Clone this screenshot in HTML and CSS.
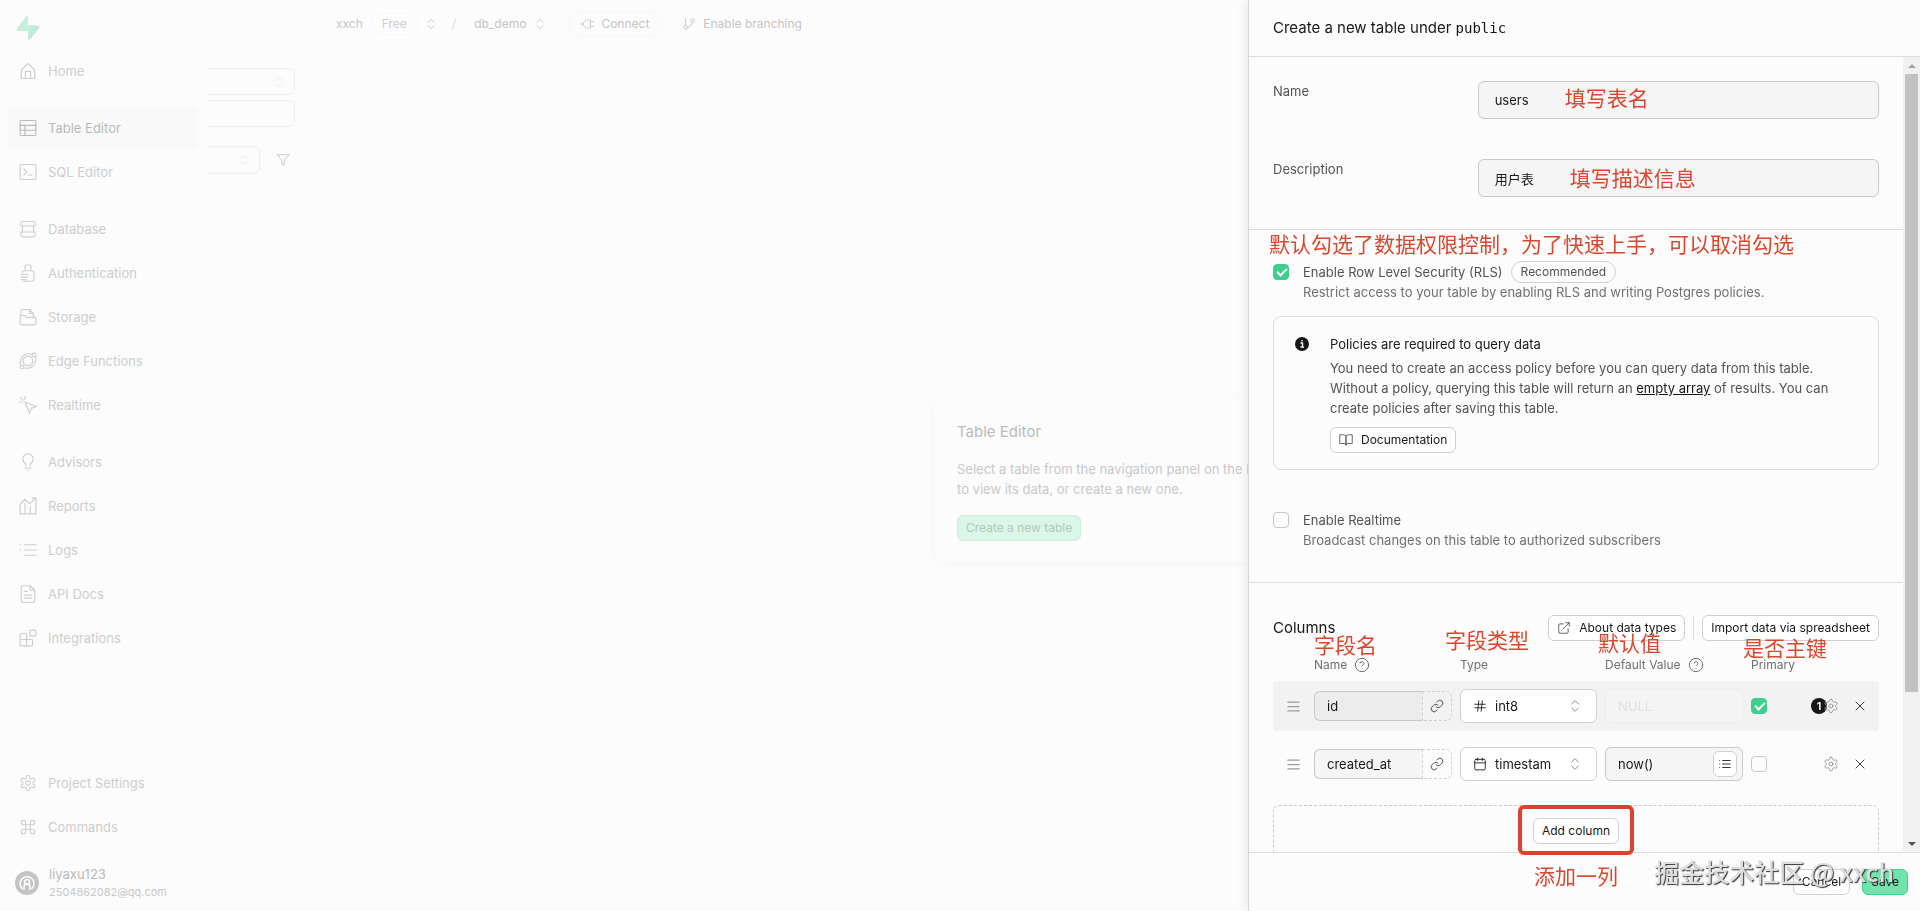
FILE: index.html
```html
<!DOCTYPE html>
<html lang="en">
<head>
    <meta charset="UTF-8">
    <meta name="viewport" content="width=device-width, initial-scale=1.0">
    <title>Table Editor</title>
    <link rel="stylesheet" href="styles.css">
</head>
<body>
    <svg class="sprite" aria-hidden="true">
        <symbol id="i-updown" viewBox="0 0 24 24"><path d="m7 15 5 5 5-5M7 9l5-5 5 5"/></symbol>
        <symbol id="i-gear" viewBox="0 0 24 24"><path d="M12.22 2h-.44a2 2 0 0 0-2 2v.18a2 2 0 0 1-1 1.73l-.43.25a2 2 0 0 1-2 0l-.15-.08a2 2 0 0 0-2.73.73l-.22.38a2 2 0 0 0 .73 2.73l.15.1a2 2 0 0 1 1 1.72v.51a2 2 0 0 1-1 1.74l-.15.09a2 2 0 0 0-.73 2.73l.22.38a2 2 0 0 0 2.73.73l.15-.08a2 2 0 0 1 2 0l.43.25a2 2 0 0 1 1 1.73V20a2 2 0 0 0 2 2h.44a2 2 0 0 0 2-2v-.18a2 2 0 0 1 1-1.73l.43-.25a2 2 0 0 1 2 0l.15.08a2 2 0 0 0 2.73-.73l.22-.39a2 2 0 0 0-.73-2.73l-.15-.08a2 2 0 0 1-1-1.74v-.5a2 2 0 0 1 1-1.74l.15-.09a2 2 0 0 0 .73-2.73l-.22-.38a2 2 0 0 0-2.73-.73l-.15.08a2 2 0 0 1-2 0l-.43-.25a2 2 0 0 1-1-1.73V4a2 2 0 0 0-2-2z"/><circle cx="12" cy="12" r="3"/></symbol>
        <symbol id="i-help" viewBox="0 0 24 24"><circle cx="12" cy="12" r="10"/><path d="M9.09 9a3 3 0 0 1 5.83 1c0 2-3 3-3 3M12 17h.01"/></symbol>
        <symbol id="i-link" viewBox="0 0 24 24"><path d="M10 13a5 5 0 0 0 7.54.54l3-3a5 5 0 0 0-7.07-7.07l-1.72 1.71"/><path d="M14 11a5 5 0 0 0-7.54-.54l-3 3a5 5 0 0 0 7.07 7.07l1.71-1.71"/></symbol>
        <symbol id="i-menu" viewBox="0 0 24 24"><path d="M3 5h18M3 12h18M3 19h18"/></symbol>
        <symbol id="i-close" viewBox="0 0 24 24"><path d="M18 6 6 18M6 6l12 12"/></symbol>
        <symbol id="i-list" viewBox="0 0 24 24"><path d="M8 6h13M8 12h13M8 18h13M3 6h.01M3 12h.01M3 18h.01"/></symbol>
    </svg>

    <div class="app">
        <aside class="sidebar">
            <svg class="logo" viewBox="0 0 24 24" fill="#c6eedd"><path d="M13.9 23.6c-.6.7-1.7.3-1.8-.6V9.3h9.3c1.7 0 2.6 2 1.6 3.3z" fill="#bfebd8"/><path d="M10.1.4c.6-.7 1.7-.3 1.8.6v14H2.6C.9 15 0 13 1 11.700z"/></svg>
            <nav class="nav">
                <ul>
                    <li><a href="#"><svg class="icon" viewBox="0 0 24 24"><path d="M3 10.500 12 2l9 8.500V22H3zM8.500 22v-9.500h7V22"/></svg>Home</a></li>
                </ul>
                <ul>
                    <li><a href="#" class="active"><svg class="icon" viewBox="0 0 24 24"><rect x="1.500" y="2" width="21" height="20" rx="2"/><path d="M1.500 8.500h21M1.500 15h21M8 8.500V22"/></svg>Table Editor</a></li>
                    <li><a href="#"><svg class="icon" viewBox="0 0 24 24"><rect x="1.500" y="2" width="21" height="20" rx="2"/><path d="m6.500 8 4 4-4 4M12 16h5.500"/></svg>SQL Editor</a></li>
                </ul>
                <ul>
                    <li><a href="#"><svg class="icon" viewBox="0 0 24 24"><rect x="2.500" y="2" width="19" height="6" rx="2"/><path d="M4.500 8v8M19.500 8v8"/><rect x="2.500" y="16" width="19" height="6.500" rx="2"/></svg>Database</a></li>
                    <li><a href="#"><svg class="icon" viewBox="0 0 24 24"><path d="M4 12v-1a2 2 0 0 1 2-2h12a2 2 0 0 1 2 2v10a2 2 0 0 1-2 2H6M8 9V5a4 4 0 0 1 8 0v4M3 14h9M3 17.500h9M3 21h7"/></svg>Authentication</a></li>
                    <li><a href="#"><svg class="icon" viewBox="0 0 24 24"><path d="M2.500 10V3.500A1.500 1.500 0 0 1 4 2h10l5 5v4M14 2v5h5"/><path d="M1.500 10h6l3 2.500h10.500a1.500 1.500 0 0 1 1.500 1.500v7a1.500 1.500 0 0 1-1.500 1.500H3A1.500 1.500 0 0 1 1.500 21z"/></svg>Storage</a></li>
                    <li><a href="#"><svg class="icon" viewBox="0 0 24 24"><circle cx="12" cy="12" r="6.500"/><circle cx="20" cy="4" r="2.500"/><circle cx="4" cy="20" r="2.500"/><path d="M17.500 3C9 .5 1 5 1.500 17.500M6.500 21c8.500 2.500 16.500-2 16-14.500"/></svg>Edge Functions</a></li>
                    <li><a href="#"><svg class="icon" viewBox="0 0 24 24"><path d="m8 8 15 6-6.500 2.500L14 23zM8 0v5M0 8h5M1.500 1.500 5.500 5.500"/></svg>Realtime</a></li>
                </ul>
                <ul>
                    <li><a href="#"><svg class="icon" viewBox="0 0 24 24"><path d="M9 17v-2.500C6.500 13 5 11 5 8a7 7 0 0 1 14 0c0 3-1.500 5-4 6.500V17M8 20h8M10 24h4"/></svg>Advisors</a></li>
                    <li><a href="#"><svg class="icon" viewBox="0 0 24 24"><path d="M1.500 22.500V10L8 3l6 6 8.500-7.500v21zM17.500 1.500h5v5M8 9v13.500M15 13v9.500"/></svg>Reports</a></li>
                    <li><a href="#"><svg class="icon" viewBox="0 0 24 24"><path d="M7 5h16M7 12h16M7 19h16M1.500 5h1M1.500 12h1"/></svg>Logs</a></li>
                    <li><a href="#"><svg class="icon" viewBox="0 0 24 24"><path d="M15 1H5a2 2 0 0 0-2 2v18a2 2 0 0 0 2 2h14a2 2 0 0 0 2-2V7zM15 1v6h6M7 8.500h4M7 13.500h10M7 17.500h10"/></svg>API Docs</a></li>
                    <li><a href="#"><svg class="icon" viewBox="0 0 24 24"><rect x="14.500" y="1.500" width="8" height="8" rx="1"/><path d="M10 22.500V7a1 1 0 0 0-1-1H2.500a1 1 0 0 0-1 1v14.500a1 1 0 0 0 1 1H17a1 1 0 0 0 1-1V15a1 1 0 0 0-1-1H1.500"/></svg>Integrations</a></li>
                </ul>
            </nav>
            <nav class="nav nav-bottom">
                <ul>
                    <li><a href="#"><svg class="icon"><use href="#i-gear"/></svg>Project Settings</a></li>
                    <li><a href="#"><svg class="icon" viewBox="0 0 24 24"><path d="M15 6v12a3 3 0 1 0 3-3H6a3 3 0 1 0 3 3V6a3 3 0 1 0-3 3h12a3 3 0 1 0-3-3"/></svg>Commands</a></li>
                </ul>
                <div class="user">
                    <svg class="avatar" viewBox="0 0 24 24"><circle cx="12" cy="12" r="12" fill="#c4c4c4"/><g fill="none" stroke="#fcfcfc" stroke-width="1.500"><path d="M7.500 18a7 7 0 1 1 9 0"/><circle cx="12" cy="11" r="2.500"/><path d="M9 19v-3a3 3 0 0 1 6 0v3"/></g></svg>
                    <div>
                        <div class="user-name">liyaxu123</div>
                        <div class="user-mail">2504862082@qq.com</div>
                    </div>
                </div>
            </nav>
        </aside>

        <div class="table-list">
            <div class="box box-schema"><svg class="icon icon-sm"><use href="#i-updown"/></svg></div>
            <div class="box box-new"></div>
            <div class="search-row">
                <div class="box box-search"><svg class="icon icon-sm"><use href="#i-updown"/></svg></div>
                <svg class="icon icon-filter" viewBox="0 0 24 24"><path d="M22 3H2l8 9.460V19l4 2v-8.540z"/></svg>
            </div>
        </div>

        <div class="content">
            <header class="topbar">
                <span class="org">xxch</span>
                <span class="plan">Free</span>
                <svg class="icon icon-sm"><use href="#i-updown"/></svg>
                <span class="slash">/</span>
                <span class="project">db_demo</span>
                <svg class="icon icon-sm"><use href="#i-updown"/></svg>
                <button class="connect"><svg class="icon icon-sm" viewBox="0 0 24 24"><path d="M0 12h6M18 8h6M18 16h6M6 12c0-4 2-7 6-7h6v14h-6c-4 0-6-3-6-7z"/></svg>Connect</button>
                <button class="branching"><svg class="icon icon-sm" viewBox="0 0 24 24"><path d="M6 3v12M6 21a3 3 0 1 0 0-6 3 3 0 0 0 0 6M18 9a3 3 0 1 0 0-6 3 3 0 0 0 0 6M18 9a9 9 0 0 1-9 9"/></svg>Enable branching</button>
            </header>
            <main class="empty">
                <div class="empty-card">
                    <h2>Table Editor</h2>
                    <p>Select a table from the navigation panel on the left to view its data, or create a new one.</p>
                    <button class="btn btn-faded">Create a new table</button>
                </div>
            </main>
        </div>
    </div>

    <form class="panel">
        <header class="panel-header">Create a new table under <code>public</code></header>

        <div class="panel-body">
            <div class="panel-scroll">
                <section class="fields">
                    <div class="field">
                        <label for="name">Name</label>
                        <div class="field-control">
                            <input type="text" id="name" class="input" value="users">
                            <span class="note note-name">填写表名</span>
                        </div>
                    </div>
                    <div class="field">
                        <label for="description">Description</label>
                        <div class="field-control">
                            <input type="text" id="description" class="input" value="用户表">
                            <span class="note note-description">填写描述信息</span>
                        </div>
                    </div>
                </section>

                <section class="security">
                    <span class="note note-rls">默认勾选了数据权限控制，为了快速上手，可以取消勾选</span>
                    <div class="option">
                        <input type="checkbox" id="rls" class="check" checked>
                        <div>
                            <div class="option-title"><label for="rls">Enable Row Level Security (RLS)</label><span class="pill">Recommended</span></div>
                            <p>Restrict access to your table by enabling RLS and writing Postgres policies.</p>
                        </div>
                    </div>
                    <div class="alert">
                        <svg class="alert-icon" viewBox="0 0 14 14"><circle cx="7" cy="7" r="7" fill="#171717"/><path d="M5.500 6h2v4M5.500 10h3.500M7 3v1.500" fill="none" stroke="#fcfcfc" stroke-width="1.300"/></svg>
                        <div>
                            <h3>Policies are required to query data</h3>
                            <p>You need to create an access policy before you can query data from this table. Without a policy, querying this table will return an <a href="#">empty array</a> of results. You can create policies after saving this table.</p>
                            <button type="button" class="btn"><svg class="icon icon-sm" viewBox="0 0 24 24"><path d="M2 3h6a4 4 0 0 1 4 4v14a3 3 0 0 0-3-3H2zM22 3h-6a4 4 0 0 0-4 4v14a3 3 0 0 1 3-3h7z"/></svg>Documentation</button>
                        </div>
                    </div>
                    <div class="option">
                        <input type="checkbox" id="realtime" class="check">
                        <div>
                            <div class="option-title"><label for="realtime">Enable Realtime</label></div>
                            <p>Broadcast changes on this table to authorized subscribers</p>
                        </div>
                    </div>
                </section>

                <section class="columns">
                    <div class="columns-head">
                        <h2>Columns</h2>
                        <button type="button" class="btn"><svg class="icon icon-sm" viewBox="0 0 24 24"><path d="M19 13v6a2 2 0 0 1-2 2H5a2 2 0 0 1-2-2V7a2 2 0 0 1 2-2h6M15 3h6v6M10 14 21 3"/></svg>About data types</button>
                        <span class="divider"></span>
                        <button type="button" class="btn">Import data via spreadsheet</button>
                    </div>
                    <div class="row row-labels">
                        <span></span>
                        <span class="col-label">Name <svg class="icon icon-help"><use href="#i-help"/></svg><span class="note note-col-name">字段名</span></span>
                        <span class="col-label">Type<span class="note note-col-type">字段类型</span></span>
                        <span class="col-label">Default Value <svg class="icon icon-help"><use href="#i-help"/></svg><span class="note note-col-default">默认值</span></span>
                        <span class="col-label">Primary<span class="note note-col-primary">是否主键</span></span>
                    </div>
                    <div class="row row-active">
                        <svg class="icon icon-drag"><use href="#i-menu"/></svg>
                        <div class="name-group">
                            <input type="text" class="input" value="id" aria-label="Column name">
                            <button type="button" aria-label="Add foreign key"><svg class="icon icon-sm"><use href="#i-link"/></svg></button>
                        </div>
                        <div class="type">
                            <svg class="icon icon-sm" viewBox="0 0 24 24"><path d="M3 9h18M3 15h18M10 3 8 21M16 3l-2 18"/></svg>
                            <select aria-label="Column type"><option>int8</option></select>
                            <svg class="icon icon-updown"><use href="#i-updown"/></svg>
                        </div>
                        <input type="text" class="input input-default" placeholder="NULL" disabled aria-label="Default value">
                        <input type="checkbox" class="check" checked aria-label="Primary">
                        <button type="button" class="icon-btn btn-gear" aria-label="Settings"><span class="count">1</span><svg class="icon"><use href="#i-gear"/></svg></button>
                        <button type="button" class="icon-btn" aria-label="Remove"><svg class="icon"><use href="#i-close"/></svg></button>
                    </div>
                    <div class="row">
                        <svg class="icon icon-drag"><use href="#i-menu"/></svg>
                        <div class="name-group">
                            <input type="text" class="input" value="created_at" aria-label="Column name">
                            <button type="button" aria-label="Add foreign key"><svg class="icon icon-sm"><use href="#i-link"/></svg></button>
                        </div>
                        <div class="type">
                            <svg class="icon icon-sm" viewBox="0 0 24 24"><rect x="3" y="4" width="18" height="18" rx="2"/><path d="M16 2v4M8 2v4M3 10h18"/></svg>
                            <select aria-label="Column type"><option>timestamptz</option></select>
                            <svg class="icon icon-updown"><use href="#i-updown"/></svg>
                        </div>
                        <div class="default-group">
                            <input type="text" class="input input-default" value="now()" aria-label="Default value">
                            <button type="button" aria-label="Suggestions"><svg class="icon icon-sm"><use href="#i-list"/></svg></button>
                        </div>
                        <input type="checkbox" class="check" aria-label="Primary">
                        <button type="button" class="icon-btn btn-gear" aria-label="Settings"><svg class="icon"><use href="#i-gear"/></svg></button>
                        <button type="button" class="icon-btn" aria-label="Remove"><svg class="icon"><use href="#i-close"/></svg></button>
                    </div>
                    <div class="add-column">
                        <button type="button" class="btn">Add column</button>
                    </div>
                </section>
            </div>
            <div class="scrollbar">
                <span class="arrow-up"></span>
                <span class="thumb"></span>
                <span class="arrow-down"></span>
            </div>
        </div>

        <footer class="panel-footer">
            <span class="highlight"></span>
            <span class="note note-add">添加一列</span>
            <button type="button" class="btn">Cancel</button>
            <button type="submit" class="btn btn-primary">Save</button>
            <span class="watermark">掘金技术社区 @ xxch</span>
        </footer>
    </form>
</body>
</html>
```
FILE: styles.css
```css
* {
    box-sizing: border-box;
}
body {
    margin: 0;
    height: 100vh;
    overflow: hidden;
    background: #fcfcfc;
    color: #525252;
    font-family: Inter, "Noto Sans CJK SC", sans-serif;
    font-size: 13px;
    line-height: 20px;
}
h2, h3, p, ul {
    margin: 0;
    padding: 0;
    font-weight: 400;
}
button, input, select {
    font: inherit;
    color: inherit;
}
button {
    padding: 0;
    border: 0;
    background: none;
    cursor: pointer;
}
.sprite {
    display: none;
}
.icon {
    width: 18px;
    height: 18px;
    flex: none;
    fill: none;
    stroke: currentColor;
    stroke-width: 1.5;
    stroke-linecap: round;
    stroke-linejoin: round;
}
.icon-sm {
    width: 14px;
    height: 14px;
}

/* page behind the panel */
.app {
    display: flex;
    height: 100vh;
    color: #c8c8c8;
}
.sidebar {
    display: flex;
    flex-direction: column;
    width: 208px;
    flex: none;
    padding: 16px 8px 10px;
}
.logo {
    width: 24px;
    height: 24px;
    margin: 0 8px 9px;
}
.nav ul {
    list-style: none;
    padding-bottom: 13px;
}
.nav a {
    display: flex;
    align-items: center;
    gap: 11px;
    height: 44px;
    width: 189px;
    padding-left: 11px;
    border-radius: 6px;
    color: #cdcdcd;
    text-decoration: none;
}
.nav a.active {
    background: #f9f9f9;
    color: #bababa;
}
.nav-bottom {
    margin-top: auto;
}
.nav-bottom ul {
    padding-bottom: 16px;
}
.user {
    display: flex;
    align-items: center;
    gap: 10px;
    padding-left: 7px;
}
.avatar {
    width: 24px;
    height: 24px;
}
.user-name {
    color: #bababa;
    line-height: 18px;
}
.user-mail {
    font-size: 11px;
    line-height: 18px;
}
.table-list {
    width: 106px;
    flex: none;
    padding-top: 68px;
    color: #e6e6e6;
}
.box {
    display: flex;
    align-items: center;
    justify-content: flex-end;
    width: 87px;
    height: 27px;
    padding-right: 8px;
    border: 1px solid #eeeeee;
    border-left: 0;
    border-radius: 0 6px 6px 0;
}
.box-new {
    margin-top: 5px;
}
.search-row {
    display: flex;
    align-items: center;
    gap: 16px;
    margin-top: 19px;
}
.box-search {
    width: 52px;
    height: 28px;
}
.icon-filter {
    width: 14px;
    height: 14px;
    color: #c4c4c4;
}
.content {
    flex: 1;
    display: flex;
    flex-direction: column;
}
.topbar {
    display: flex;
    align-items: center;
    height: 48px;
    padding-left: 22px;
    font-size: 12px;
    color: #c4c4c4;
}
.plan {
    margin: 0 6px 0 8px;
    padding: 0 10px;
    border: 1px solid #f7f7f7;
    border-radius: 12px;
    color: #cdcdcd;
}
.slash {
    margin: 0 18px 0 14px;
    color: #dddddd;
}
.project {
    margin-right: 7px;
}
.connect, .branching {
    display: flex;
    align-items: center;
    gap: 7px;
}
.connect {
    height: 26px;
    margin: 0 22px;
    padding: 0 10px;
    border: 1px solid #f6f6f6;
    border-radius: 12px;
}
.empty {
    flex: 1;
    display: flex;
    align-items: center;
    justify-content: center;
}
.empty-card {
    width: 364px;
    padding: 24px 22px 20px;
    border-radius: 6px;
    box-shadow: 0 2px 8px #f5f5f5;
}
.empty-card h2 {
    margin-bottom: 17px;
    font-size: 15px;
    color: #bababa;
}
.empty-card p {
    margin-bottom: 16px;
}

/* buttons and inputs */
.btn {
    display: inline-flex;
    align-items: center;
    gap: 8px;
    height: 26px;
    padding: 0 8px;
    border: 1px solid #d0d0d0;
    border-radius: 6px;
    background: #ffffff;
    color: #171717;
    font-size: 12px;
    line-height: 16px;
    white-space: nowrap;
}
.btn .icon {
    color: #525252;
}
.btn-faded {
    background: #d9f6e8;
    border-color: #cceedd;
    color: #b3c8be;
}
.btn-primary {
    background: #72e3ad;
    border-color: #3fcf8e;
}
.input {
    width: 100%;
    height: 38px;
    padding: 0 16px;
    border: 1px solid #c8c8c8;
    border-radius: 6px;
    background: #f5f5f5;
    color: #171717;
    outline: 0;
}
.check {
    appearance: none;
    width: 16px;
    height: 16px;
    flex: none;
    margin: 0;
    border: 1px solid #c8c8c8;
    border-radius: 4px;
    background: #fcfcfc;
}
.check:checked {
    border-color: #3ecf8e;
    background: #3ecf8e;
}
.check:checked::after {
    content: "";
    display: block;
    width: 4px;
    height: 8px;
    margin: 1px 0 0 5px;
    border: solid #ffffff;
    border-width: 0 2px 2px 0;
    transform: rotate(45deg);
}

/* side panel */
.panel {
    position: fixed;
    top: 0;
    right: 0;
    bottom: 0;
    display: flex;
    flex-direction: column;
    width: 672px;
    border-left: 1px solid #d8d8d8;
    background: #fcfcfc;
    box-shadow: 0 0 12px rgba(0, 0, 0, 0.1);
}
.panel-header {
    padding: 18px 24px;
    border-bottom: 1px solid #dcdcdc;
    color: #171717;
    font-size: 15px;
}
.panel-header code {
    font-family: "DejaVu Sans Mono", monospace;
    font-size: 14px;
}
.panel-body {
    display: flex;
    flex: 1;
    min-height: 0;
}
.panel-scroll {
    flex: 1;
    overflow: hidden;
}
.panel-scroll section {
    position: relative;
    padding: 24px;
    border-bottom: 1px solid #dcdcdc;
}
.panel-scroll .fields {
    display: flex;
    flex-direction: column;
    gap: 40px;
    padding-bottom: 32px;
}
.field {
    display: grid;
    grid-template-columns: 1fr 2fr;
    gap: 4px;
}
.field-control {
    position: relative;
}
.panel-scroll .security {
    padding-top: 32px;
    padding-bottom: 32px;
}
.option {
    display: flex;
    gap: 14px;
}
.option .check {
    margin-top: 2px;
}
.option-title {
    display: flex;
    align-items: center;
    gap: 8px;
    height: 20px;
}
.option p {
    color: #707070;
}
.pill {
    padding: 0 9px;
    border: 1px solid #d0d0d0;
    border-radius: 11px;
    font-size: 12px;
}
.alert {
    display: flex;
    gap: 21px;
    margin: 14px 0 40px;
    padding: 17px 21px 16px;
    border: 1px solid #dcdcdc;
    border-radius: 8px;
}
.alert-icon {
    width: 14px;
    height: 14px;
    flex: none;
    margin-top: 3px;
}
.alert h3 {
    margin-bottom: 4px;
    color: #171717;
    font-size: 13px;
}
.alert p {
    margin-bottom: 9px;
}
.alert a {
    color: #171717;
}
.panel-scroll .columns {
    padding-top: 32px;
}
.columns-head {
    display: flex;
    align-items: center;
    gap: 8px;
    margin-bottom: 12px;
}
.columns-head h2 {
    margin-right: auto;
    color: #171717;
    font-size: 15px;
}
.divider {
    width: 1px;
    height: 24px;
    background: #dcdcdc;
}
.row {
    display: grid;
    grid-template-columns: 26px 138px 137px 138px 47px 38px 16px;
    column-gap: 8px;
    align-items: center;
    margin-bottom: 8px;
    padding: 8px 0 8px 7px;
    border-radius: 4px;
}
.row-labels {
    margin-bottom: 4px;
    padding-top: 0;
    padding-bottom: 0;
    color: #707070;
    font-size: 12px;
}
.row-active {
    background: #f2f2f2;
}
.col-label {
    position: relative;
    display: flex;
    align-items: center;
    gap: 7px;
    line-height: 24px;
}
.icon-help {
    width: 16px;
    height: 16px;
}
.icon-drag {
    justify-self: center;
    width: 15px;
    height: 15px;
    color: #9a9a9a;
    stroke-width: 2;
}
.name-group {
    display: flex;
}
.name-group .input {
    height: 30px;
    padding: 0 12px;
    border-right: 0;
    border-radius: 6px 0 0 6px;
}
.name-group button {
    display: grid;
    place-items: center;
    width: 30px;
    flex: none;
    border: 1px dashed #d0d0d0;
    border-radius: 0 6px 6px 0;
    color: #3c3c3c;
}
.row-active .name-group .input {
    background: #ececec;
}
.type {
    display: flex;
    align-items: center;
    gap: 8px;
    height: 34px;
    padding: 0 13px 0 12px;
    border: 1px solid #d0d0d0;
    border-radius: 6px;
    background: #ffffff;
    color: #171717;
}
.type select {
    appearance: none;
    flex: 1;
    min-width: 0;
    padding: 0;
    margin-right: 8px;
    border: 0;
    background: none;
    outline: 0;
}
.icon-updown {
    width: 16px;
    height: 16px;
    color: #8a8a8a;
}
.input-default {
    height: 34px;
    padding: 0 12px;
}
.input-default:disabled {
    border-color: #ececec;
    background: #f4f4f4;
}
.input-default::placeholder {
    color: #e0e0e0;
}
.default-group {
    position: relative;
}
.default-group button {
    position: absolute;
    top: 4px;
    right: 6px;
    display: grid;
    place-items: center;
    width: 24px;
    height: 26px;
    border: 1px solid #d0d0d0;
    border-radius: 6px;
    background: #ffffff;
    color: #171717;
}
.icon-btn {
    display: flex;
    align-items: center;
    justify-content: flex-end;
    color: #3c3c3c;
}
.icon-btn .icon {
    width: 16px;
    height: 16px;
}
.btn-gear {
    margin-right: 5px;
    color: #9a9a9a;
}
.count {
    width: 16px;
    height: 16px;
    margin-right: -4px;
    border-radius: 50%;
    background: #171717;
    color: #ffffff;
    font-size: 11px;
    font-weight: 600;
    line-height: 16px;
}
.add-column {
    display: flex;
    justify-content: center;
    margin-top: 16px;
    padding: 12px;
    border: 1px dashed #c8c8c8;
    border-radius: 6px;
}
.scrollbar {
    display: flex;
    flex-direction: column;
    align-items: center;
    width: 17px;
    padding: 7px 0 6px;
    background: #f1f1f1;
}
.arrow-up, .arrow-down {
    border: 4px solid transparent;
}
.arrow-up {
    border-top: 0;
    border-bottom-color: #a3a3a3;
    margin-bottom: 6px;
}
.arrow-down {
    border-bottom: 0;
    border-top-color: #505050;
    margin-top: auto;
}
.thumb {
    width: 13px;
    height: 79%;
    background: #c1c1c1;
}
.panel-footer {
    position: relative;
    display: flex;
    justify-content: flex-end;
    gap: 12px;
    padding: 16px 12px;
    border-top: 1px solid #dcdcdc;
}

/* notes drawn over the form */
.note {
    position: absolute;
    color: #d9472f;
    font-family: "Noto Sans CJK SC", sans-serif;
    font-size: 21px;
    line-height: 24px;
    white-space: nowrap;
    pointer-events: none;
}
.note-name {
    top: 4px;
    left: 87px;
}
.note-description {
    top: 6px;
    left: 92px;
}
.note-rls {
    top: 1px;
    left: 20px;
}
.note-col-name {
    bottom: 21px;
    left: 0;
}
.note-col-type {
    bottom: 26px;
    left: -15px;
}
.note-col-default {
    bottom: 23px;
    left: -7px;
}
.note-col-primary {
    bottom: 18px;
    left: -8px;
}
.note-add {
    top: 10px;
    left: 285px;
}
.highlight {
    position: absolute;
    top: -48px;
    left: 269px;
    width: 116px;
    height: 50px;
    border: 4px solid #d9432c;
    border-radius: 6px;
}
.watermark {
    position: absolute;
    top: 2px;
    right: 26px;
    color: #dddddd;
    font-family: "Noto Sans CJK SC", sans-serif;
    font-size: 25px;
    font-weight: 500;
    line-height: 32px;
    text-shadow: 1px 1px 1px #333333;
    white-space: nowrap;
}
```
